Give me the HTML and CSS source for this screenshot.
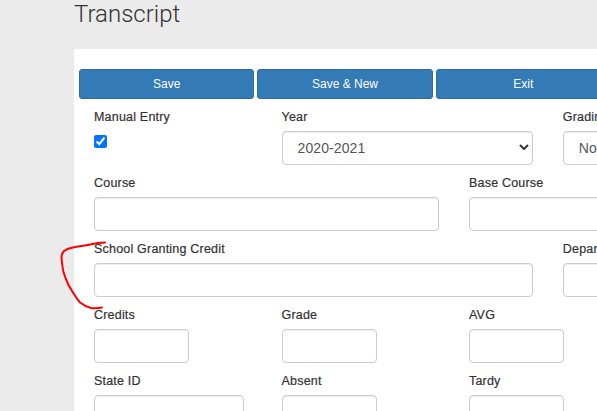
FILE: index.html
```html
<!DOCTYPE html>
<html lang="en">
<head>
<meta charset="UTF-8">
<meta name="viewport" content="width=device-width, initial-scale=1.0">
<title>Transcript</title>
<link rel="stylesheet" href="styles.css">
</head>
<body>
<div class="page">
    <h1>Transcript</h1>
    <div class="panel">
        <div class="buttons">
            <button type="button" class="btn">Save</button>
            <button type="button" class="btn">Save &amp; New</button>
            <button type="button" class="btn">Exit</button>
        </div>
        <form class="form">
            <div class="row">
                <div class="field span-2">
                    <label for="manual">Manual Entry</label>
                    <input type="checkbox" id="manual" class="check" checked>
                </div>
                <div class="field span-3">
                    <label for="year">Year</label>
                    <div class="select-wrap">
                        <select id="year" class="input">
                            <option>2020-2021</option>
                        </select>
                        <svg class="chevron" viewBox="0 0 10 6" aria-hidden="true"><path d="M1 1l4 4 4-4" fill="none" stroke="#333" stroke-width="2"/></svg>
                    </div>
                </div>
                <div class="field span-3">
                    <label for="grading">Grading</label>
                    <div class="select-wrap">
                        <select id="grading" class="input">
                            <option>No</option>
                        </select>
                    </div>
                </div>
            </div>
            <div class="row">
                <div class="field span-4">
                    <label for="course">Course</label>
                    <input type="text" id="course" class="input">
                </div>
                <div class="field span-4">
                    <label for="baseCourse">Base Course</label>
                    <input type="text" id="baseCourse" class="input">
                </div>
            </div>
            <div class="row">
                <div class="field span-5">
                    <label for="school">School Granting Credit</label>
                    <input type="text" id="school" class="input">
                </div>
                <div class="field span-3">
                    <label for="department">Department</label>
                    <input type="text" id="department" class="input">
                </div>
            </div>
            <div class="row">
                <div class="field span-2">
                    <label for="credits">Credits</label>
                    <input type="text" id="credits" class="input small">
                </div>
                <div class="field span-2">
                    <label for="grade">Grade</label>
                    <input type="text" id="grade" class="input small">
                </div>
                <div class="field span-2">
                    <label for="avg">AVG</label>
                    <input type="text" id="avg" class="input small">
                </div>
            </div>
            <div class="row">
                <div class="field span-2">
                    <label for="stateId">State ID</label>
                    <input type="text" id="stateId" class="input medium">
                </div>
                <div class="field span-2">
                    <label for="absent">Absent</label>
                    <input type="text" id="absent" class="input small">
                </div>
                <div class="field span-2">
                    <label for="tardy">Tardy</label>
                    <input type="text" id="tardy" class="input small">
                </div>
            </div>
        </form>
    </div>
</div>

<!-- red pen mark drawn over the form -->
<svg class="scribble" width="597" height="411" viewBox="0 0 597 411" aria-hidden="true">
    <path d="M105 242.5C99 242.5 94 243.5 90 244.5C84 246 78 246 73 247.5C69 248 66 249.5 64 251C62 253 61.5 255 61.5 258C62 263 62.5 268 63.5 272C65 277 66.5 281 68.5 285C72 291 76 298 80 302.5C84 305.5 87 307 91 308C95 308.5 99 308 102 307.5" fill="none" stroke="#f00" stroke-width="2" stroke-linecap="round"/>
</svg>
</body>
</html>
```

FILE: styles.css
```css
html, body {
    height: 100%;
    overflow: hidden;
}
body {
    margin: 0;
    background-color: #ebebeb;
    font-family: "Liberation Sans", Arial, sans-serif;
    color: #333;
}
.page {
    width: 1200px;
    padding-left: 74px;
}
h1 {
    margin: 0;
    height: 49px;
    font-family: Roboto, sans-serif;
    font-weight: 300;
    font-size: 24px;
    line-height: 28px;
    color: #333;
}
.panel {
    background-color: #fff;
    border-radius: 3px;
    padding: 20px 5px 0;
    height: 400px;
}
.buttons {
    display: flex;
    gap: 3px;
}
.btn {
    width: 175.33px;
    height: 30px;
    padding: 0;
    border: 1px solid #2e6da4;
    border-radius: 3px;
    background-color: #337ab7;
    color: #fff;
    font-family: inherit;
    font-size: 12px;
}
.form {
    padding: 10px 0 0 15px;
}
.row {
    display: grid;
    grid-template-columns: repeat(12, 63.75px);
    column-gap: 30px;
    margin-bottom: 10px;
}
.field {
    display: flex;
    flex-direction: column;
    align-items: flex-start;
}
.span-2 { grid-column-end: span 2; }
.span-3 { grid-column-end: span 3; }
.span-4 { grid-column-end: span 4; }
.span-5 { grid-column-end: span 5; }
label {
    display: block;
    height: 14px;
    margin-bottom: 8px;
    font-size: 12.5px;
    line-height: 17px;
    font-weight: 400;
    letter-spacing: 0.2px;
    -webkit-text-stroke: 0.2px #333;
    white-space: nowrap;
}
.input {
    display: block;
    width: 100%;
    height: 34px;
    box-sizing: border-box;
    padding: 6px 12px;
    border: 1px solid #ccc;
    border-radius: 4px;
    background-color: #fff;
    color: #555;
    font-family: inherit;
    font-size: 14px;
    box-shadow: inset 0 1px 1px rgba(0, 0, 0, 0.075);
}
.small {
    width: 95px;
}
.medium {
    width: 150px;
}
.check {
    width: 13px;
    height: 13px;
    margin: 4px 0 0;
}
.select-wrap {
    position: relative;
    width: 100%;
}
select.input {
    appearance: none;
    padding-left: 15px;
    letter-spacing: 0.1px;
}
.chevron {
    position: absolute;
    top: 13px;
    right: 4px;
    width: 10px;
    height: 6px;
}
.scribble {
    position: absolute;
    top: 0;
    left: 0;
    pointer-events: none;
}
```
